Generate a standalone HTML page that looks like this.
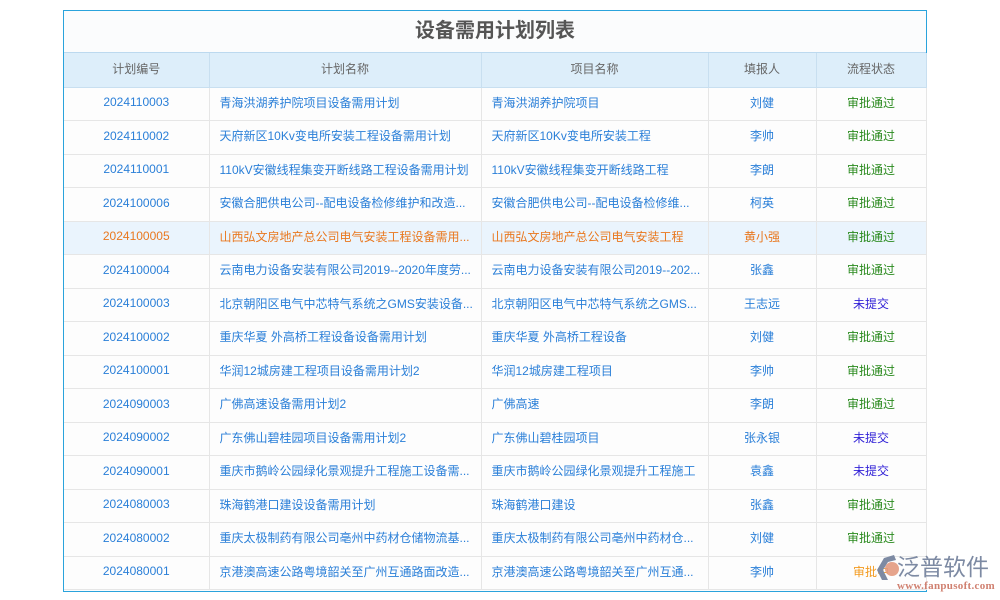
<!DOCTYPE html>
<html><head><meta charset="utf-8"><style>
*{margin:0;padding:0;box-sizing:border-box}
body{width:1000px;height:600px;background:#fff;font-family:"Liberation Sans","Noto Sans CJK SC",sans-serif;position:relative;overflow:hidden}
.panel{position:absolute;left:63px;top:10px;width:864px;height:582px;border:1px solid #2aa3dc;background:#fbfcfd}
.title{height:42px;line-height:41px;text-align:center;font-size:20px;font-weight:bold;color:#555;border-bottom:1px solid #bcd9ef}
table{border-collapse:collapse;width:862px;table-layout:fixed}
th{height:34px;background:#ddeefa;color:#666;font-weight:normal;font-size:12px;border-right:1px solid #c8dff0;border-bottom:1px solid #c8dff0;padding-bottom:2px}
td{height:33.5px;font-size:12px;color:#2a7fd8;border-right:1px solid #e6e6e6;border-bottom:1px solid #e6e6e6;white-space:nowrap;overflow:hidden;background:#fdfdfd;padding-bottom:3px}
td.c{text-align:center}
td.l{padding-left:10px}
tr.hl td{background:#eaf4fd;color:#e9781f}
.g{color:#2a8a1e!important}.u{color:#2f1fd6!important}.o{color:#f39a1e!important}
.logo{position:absolute;left:872px;top:550px;width:128px;height:50px}
</style></head><body>
<div class="panel">
<div class="title">设备需用计划列表</div>
<table>
<colgroup><col style="width:145px"><col style="width:272px"><col style="width:227px"><col style="width:108px"><col style="width:110px"></colgroup>
<tr><th style="height:33px">计划编号</th><th>计划名称</th><th>项目名称</th><th>填报人</th><th>流程状态</th></tr>
<tr><td class="c">2024110003</td><td class="l">青海洪湖养护院项目设备需用计划</td><td class="l">青海洪湖养护院项目</td><td class="c">刘健</td><td class="c g">审批通过</td></tr>
<tr><td class="c">2024110002</td><td class="l">天府新区10Kv变电所安装工程设备需用计划</td><td class="l">天府新区10Kv变电所安装工程</td><td class="c">李帅</td><td class="c g">审批通过</td></tr>
<tr><td class="c">2024110001</td><td class="l">110kV安徽线程集变开断线路工程设备需用计划</td><td class="l">110kV安徽线程集变开断线路工程</td><td class="c">李朗</td><td class="c g">审批通过</td></tr>
<tr><td class="c">2024100006</td><td class="l">安徽合肥供电公司--配电设备检修维护和改造...</td><td class="l">安徽合肥供电公司--配电设备检修维...</td><td class="c">柯英</td><td class="c g">审批通过</td></tr>
<tr class="hl"><td class="c">2024100005</td><td class="l">山西弘文房地产总公司电气安装工程设备需用...</td><td class="l">山西弘文房地产总公司电气安装工程</td><td class="c">黄小强</td><td class="c g">审批通过</td></tr>
<tr><td class="c">2024100004</td><td class="l">云南电力设备安装有限公司2019--2020年度劳...</td><td class="l">云南电力设备安装有限公司2019--202...</td><td class="c">张鑫</td><td class="c g">审批通过</td></tr>
<tr><td class="c">2024100003</td><td class="l">北京朝阳区电气中芯特气系统之GMS安装设备...</td><td class="l">北京朝阳区电气中芯特气系统之GMS...</td><td class="c">王志远</td><td class="c u">未提交</td></tr>
<tr><td class="c">2024100002</td><td class="l">重庆华夏 外高桥工程设备设备需用计划</td><td class="l">重庆华夏 外高桥工程设备</td><td class="c">刘健</td><td class="c g">审批通过</td></tr>
<tr><td class="c">2024100001</td><td class="l">华润12城房建工程项目设备需用计划2</td><td class="l">华润12城房建工程项目</td><td class="c">李帅</td><td class="c g">审批通过</td></tr>
<tr><td class="c">2024090003</td><td class="l">广佛高速设备需用计划2</td><td class="l">广佛高速</td><td class="c">李朗</td><td class="c g">审批通过</td></tr>
<tr><td class="c">2024090002</td><td class="l">广东佛山碧桂园项目设备需用计划2</td><td class="l">广东佛山碧桂园项目</td><td class="c">张永银</td><td class="c u">未提交</td></tr>
<tr><td class="c">2024090001</td><td class="l">重庆市鹅岭公园绿化景观提升工程施工设备需...</td><td class="l">重庆市鹅岭公园绿化景观提升工程施工</td><td class="c">袁鑫</td><td class="c u">未提交</td></tr>
<tr><td class="c">2024080003</td><td class="l">珠海鹤港口建设设备需用计划</td><td class="l">珠海鹤港口建设</td><td class="c">张鑫</td><td class="c g">审批通过</td></tr>
<tr><td class="c">2024080002</td><td class="l">重庆太极制药有限公司亳州中药材仓储物流基...</td><td class="l">重庆太极制药有限公司亳州中药材仓...</td><td class="c">刘健</td><td class="c g">审批通过</td></tr>
<tr><td class="c">2024080001</td><td class="l">京港澳高速公路粤境韶关至广州互通路面改造...</td><td class="l">京港澳高速公路粤境韶关至广州互通...</td><td class="c">李帅</td><td class="c o">审批中</td></tr>
</table>
</div>
<div class="logo">
<svg width="26" height="28" style="position:absolute;left:4px;top:4px" viewBox="0 0 26 28"><path d="M18 1 L8 4 L1 16 L6 26 L12 26 L7 16 L12 8 L20 6 Z" fill="#7d8aa3"/><circle cx="16" cy="15" r="7" fill="#e39a80" opacity="0.9"/></svg>
<div style="position:absolute;left:25px;top:1px;font-size:23px;line-height:28px;color:#7d8aa3;font-family:'Noto Sans CJK SC',sans-serif;letter-spacing:0px">泛普软件</div>
<div style="position:absolute;left:25px;top:30px;font-size:11px;color:#d08070;font-family:'Liberation Serif',serif;font-weight:bold;letter-spacing:0.3px">www.fanpusoft.com</div>
</div>
</body></html>
